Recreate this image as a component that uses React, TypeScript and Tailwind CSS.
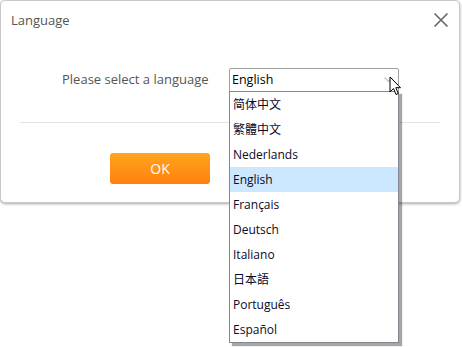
import { useState } from "react";

const LANGS = [
  "简体中文",
  "繁體中文",
  "Nederlands",
  "English",
  "Français",
  "Deutsch",
  "Italiano",
  "日本語",
  "Português",
  "Español",
];

const font = {
  fontFamily: '"Open Sans", "Noto Sans CJK SC", sans-serif',
};

export default function App() {
  const [selected, setSelected] = useState("English");

  return (
    <div className="w-[462px] h-[347px] bg-white relative overflow-hidden" style={font}>
      <div className="w-[460px] h-[203px] bg-white border border-[#c8c8c8] rounded-[5px] shadow-[0_1px_3px_rgba(0,0,0,0.35)] flex flex-col">
        <div className="h-[40px] flex items-center justify-between pl-[10px] pr-[10px]">
          <span className="text-[13px] text-[#555]">Language</span>
          <svg width="16" height="16" viewBox="0 0 16 16" className="mt-[-2px]">
            <path d="M1.5 1.5 L14.5 14.5 M14.5 1.5 L1.5 14.5" stroke="#666" strokeWidth="1.6" />
          </svg>
        </div>

        <div className="flex items-center mt-[27px] pl-[61px] gap-[21px]">
          <span className="text-[13px] text-[#555] w-[146px] whitespace-nowrap">Please select a language</span>
          <div className="relative">
            <div className="w-[170px] h-[24px] border border-[#a0a0a0] rounded-t-[2px] flex items-center pl-[2px] pt-[1px] text-[12.5px] text-black">
              {selected}
              <svg width="9" height="6" viewBox="0 0 9 6" className="absolute right-[6px] top-[9px]">
                <path d="M0.5 0.5 L4.5 4.5 L8.5 0.5" stroke="#c0c0c0" fill="none" strokeWidth="1.2" />
              </svg>
            </div>
            <ul className="absolute left-0 top-[23px] w-[170px] bg-white border border-[#828790] shadow-[3px_3px_1px_rgba(0,0,0,0.35)] z-10">
              {LANGS.map((l) => (
                <li
                  key={l}
                  onClick={() => setSelected(l)}
                  className={`h-[25px] flex items-center pl-[3px] text-[12px] text-[#0a0a2a] ${
                    l === selected ? "bg-[#cce8ff]" : ""
                  }`}
                >
                  {l}
                </li>
              ))}
            </ul>
            <svg width="14" height="22" viewBox="0 0 14 22" className="absolute left-[160px] top-[8px] z-20">
              <path
                d="M1 1 L1 16 L4.5 12.5 L7 18.5 L9.3 17.5 L6.8 11.7 L11.5 11.7 Z"
                fill="white"
                stroke="black"
                strokeWidth="1"
                strokeLinejoin="round"
              />
            </svg>
          </div>
        </div>

        <div className="mx-[19px] mt-[30px] border-t border-[#e3e3e3]" />

        <div className="mt-[30px] pl-[109px]">
          <button className="w-[100px] h-[31px] rounded-[3px] bg-gradient-to-b from-[#ffa51c] to-[#ff800f] text-white text-[14px]">
            OK
          </button>
        </div>
      </div>
    </div>
  );
}
